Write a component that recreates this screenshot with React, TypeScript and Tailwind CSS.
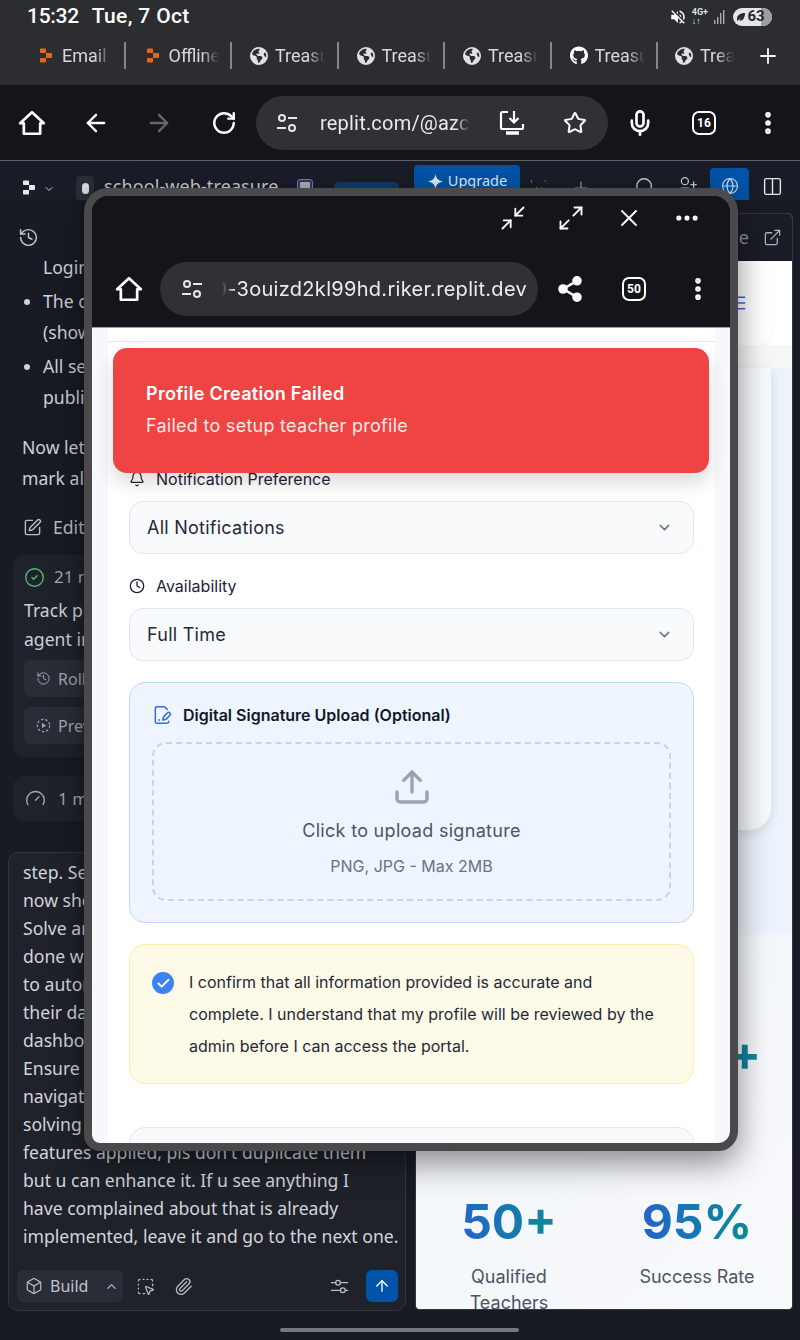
import React from "react";
import {
  ArrowLeft, ArrowRight, ArrowUp, Bell, Box, ChevronDown, ChevronUp, CircleCheck, Clock, Columns2, ExternalLink,
  FileSignature, Gauge, Globe, History, Maximize2, Mic, Minimize2, MoreHorizontal, MoreVertical, Paperclip, Plus,
  RotateCw, Search, Share2, SquareDashedMousePointer, SquarePen, Star, Upload, UserPlus, X, Check, Menu,
} from "lucide-react";
import { FaGithub } from "react-icons/fa";
import { FaEarthAmericas } from "react-icons/fa6";
import { MdVolumeOff } from "react-icons/md";

const ReplitLogo = ({ className, color }: { className?: string; color: string }) => (
  <svg viewBox="0 0 14 16" className={className} fill={color}>
    <path d="M1 1.5C1 .9 1.4.5 2 .5h4c.6 0 1 .4 1 1V5H2c-.6 0-1-.4-1-1z" />
    <path d="M7 5h5c.6 0 1 .4 1 1v3c0 .6-.4 1-1 1H7z" />
    <path d="M2 10h5v3.5c0 .6-.4 1-1 1H2c-.6 0-1-.4-1-1V11c0-.6.4-1 1-1z" />
  </svg>
);

const HomeIcon = ({ className }: { className?: string }) => (
  <svg viewBox="0 0 24 24" className={className} fill="none" stroke="currentColor" strokeWidth="2.3" strokeLinejoin="round">
    <path d="M12 2.8 1.8 12.2H5v9h14v-9h3.2z" />
  </svg>
);

const TuneIcon = ({ className }: { className?: string }) => (
  <svg viewBox="0 0 24 24" className={className} fill="none" stroke="currentColor" strokeWidth="2">
    <circle cx="7" cy="7" r="3" />
    <path d="M13 7h9M2 17h9" />
    <circle cx="17" cy="17" r="3" />
  </svg>
);

const SliderIcon = ({ className }: { className?: string }) => (
  <svg viewBox="0 0 20 20" className={className} fill="none" stroke="currentColor" strokeWidth="1.4">
    <path d="M1 6h5M11 6h8M1 14h10M16 14h3" />
    <circle cx="8.5" cy="6" r="2.5" />
    <circle cx="13.5" cy="14" r="2.5" />
  </svg>
);

const DashedPlay = ({ className }: { className?: string }) => (
  <svg viewBox="0 0 16 16" className={className} fill="none" stroke="currentColor" strokeWidth="1.3">
    <circle cx="8" cy="8" r="6.6" strokeDasharray="2.6 2" />
    <path d="M6.4 5.2 10.8 8l-4.4 2.8z" fill="currentColor" stroke="none" />
  </svg>
);

const CountBox = ({ n }: { n: string }) => (
  <div className="flex h-[24px] w-[24px] items-center justify-center rounded-[7px] border-[2.5px] border-white font-['Roboto',sans-serif] text-[12px] font-bold text-white">{n}</div>
);

const InstallIcon = () => (
  <svg viewBox="0 0 26 26" className="h-[26px] w-[26px] text-white" fill="none" stroke="currentColor" strokeWidth="2.2">
    <path d="M9 2H3.5A1.5 1.5 0 0 0 2 3.5v14A1.5 1.5 0 0 0 3.5 19h19a1.5 1.5 0 0 0 1.5-1.5V14" />
    <path d="M15 1v11M10.5 8l4.5 4.5L19.5 8" />
    <path d="M7 23h13" strokeWidth="3.5" />
  </svg>
);

const Tab = ({ icon, label }: { icon: React.ReactNode; label: string }) => (
  <div className="flex h-[27px] w-[106.5px] shrink-0 items-center border-r-2 border-[#85868a] pl-[18px]">
    <div className="flex w-[18px] shrink-0 justify-center">{icon}</div>
    <span className="ml-[7px] w-[50px] overflow-hidden whitespace-nowrap text-[18px] text-[#d8d9db] [mask-image:linear-gradient(to_right,black_65%,transparent)]">{label}</span>
  </div>
);

const Field = ({ icon, label, value }: { icon: React.ReactNode; label: string; value: string }) => (
  <div className="flex flex-col">
    <div className="flex h-[22px] items-center gap-[11px] text-[16px] font-normal text-[#1b2433]">
      {icon}
      <span>{label}</span>
    </div>
    <div className="mt-[11px] flex h-[53px] items-center justify-between rounded-[14px] border border-[#e2e8f0] bg-[#f8fafc] pl-[17px] pr-[20px] text-[18px] tracking-[0.25px] text-[#1f2937]">
      <span>{value}</span>
      <ChevronDown className="h-[17px] w-[17px] text-[#6b7280]" strokeWidth={2} />
    </div>
  </div>
);

const gradient = "bg-gradient-to-r from-[#2563c9] to-[#0d8a94] bg-clip-text text-transparent";

const FloatingWindow = () => (
  <div className="absolute left-[84px] top-[188px] z-10 flex h-[963px] w-[654px] flex-col overflow-hidden rounded-[24px] rounded-bl-[16px] rounded-br-[20px] border-[8px] border-[#4a4a4c] bg-[#13151a] shadow-[0_12px_32px_rgba(0,0,0,0.45)]">
    <div className="flex h-[131px] shrink-0 flex-col bg-[#13151a] text-white">
      <div className="flex h-[50px] items-center justify-end gap-[30px] pb-[7px] pr-[29px]">
        <Minimize2 className="h-[28px] w-[28px]" strokeWidth={1.6} />
        <Maximize2 className="h-[28px] w-[28px]" strokeWidth={1.6} />
        <X className="h-[28px] w-[28px]" strokeWidth={1.6} />
        <MoreHorizontal className="h-[28px] w-[28px]" strokeWidth={2.4} />
      </div>
      <div className="mt-[16px] flex h-[54px] items-center pl-[23px]">
        <HomeIcon className="h-[28px] w-[28px]" />
        <div className="ml-[17px] flex h-[54px] w-[378px] items-center rounded-full bg-[#303136] pl-[20px]">
          <TuneIcon className="h-[24px] w-[24px] shrink-0 text-[#e5e6e8]" />
          <div className="ml-[18px] w-[305px] overflow-hidden whitespace-nowrap text-[20px] tracking-[0.3px] text-[#eceded] [direction:rtl] [mask-image:linear-gradient(to_right,transparent,black_12px)]">
            0-3ouizd2kl99hd.riker.replit.dev
          </div>
        </div>
        <Share2 className="ml-[18px] h-[28px] w-[28px] fill-white" strokeWidth={2.2} />
        <div className="ml-[38px]"><CountBox n="50" /></div>
        <MoreVertical className="ml-[38px] h-[28px] w-[28px]" strokeWidth={2.8} />
      </div>
    </div>
    <div className="h-[1px] shrink-0 bg-[#9a9ca3]" />
    <div className="relative flex min-h-0 flex-1 bg-[#f7f8fb]">
      <div className="ml-[16px] mr-[15px] flex min-w-0 flex-1 flex-col overflow-hidden bg-white">
        <div className="h-[14px] shrink-0 border-b border-[#e5e7eb]" />
        <div className="flex flex-col px-[21px] pt-[126px]">
          <Field icon={<Bell className="h-[16px] w-[16px]" strokeWidth={1.8} />} label="Notification Preference" value="All Notifications" />
          <div className="mt-[21px]">
            <Field icon={<Clock className="h-[16px] w-[16px]" strokeWidth={2} />} label="Availability" value="Full Time" />
          </div>
          <div className="mt-[21px] flex h-[241px] flex-col rounded-[16px] border border-[#bfdbf5] bg-[#eef5fe] px-[22px] pt-[20px]">
            <div className="flex h-[24px] items-center gap-[11px] text-[16px] font-semibold text-[#111827]">
              <FileSignature className="h-[20px] w-[20px] text-[#2f6fdb]" strokeWidth={1.8} />
              <span>Digital Signature Upload (Optional)</span>
            </div>
            <div className="mt-[15px] flex h-[159px] flex-col items-center rounded-[14px] border-2 border-dashed border-[#cdd3de] pt-[23px]">
              <Upload className="h-[40px] w-[40px] text-[#9ca3af]" strokeWidth={2} />
              <div className="mt-[10px] text-[18px] tracking-[0.3px] text-[#4b5563]">Click to upload signature</div>
              <div className="mt-[10px] text-[16px] text-[#6b7280]">PNG, JPG - Max 2MB</div>
            </div>
          </div>
          <div className="mt-[21px] flex h-[140px] items-start rounded-[16px] border border-[#fbeea8] bg-[#fefae8] pl-[22px] pt-[21px]">
            <div className="mt-[6px] flex h-[22px] w-[22px] shrink-0 items-center justify-center rounded-full bg-[#3b82f6]">
              <Check className="h-[15px] w-[15px] text-white" strokeWidth={3} />
            </div>
            <p className="ml-[15px] w-[470px] text-[16px] leading-[32px] text-[#1f2937]">
              I confirm that all information provided is accurate and complete. I understand that my profile will be reviewed by the admin before I can access the portal.
            </p>
          </div>
          <div className="mt-[43px] h-[60px] shrink-0 rounded-[16px] border border-[#e5e7eb] bg-[#f8fafc]" />
        </div>
      </div>
      <div className="absolute left-[21px] top-[20px] flex h-[125px] w-[596px] flex-col justify-center rounded-[14px] bg-[#ef4444] pb-[2px] pl-[33px] text-white shadow-[0_10px_20px_rgba(0,0,0,0.14)]">
        <div className="text-[18px] font-semibold leading-[24px] tracking-[0.3px]">Profile Creation Failed</div>
        <div className="mt-[8px] text-[18px] leading-[24px] tracking-[0.27px] text-[#fde8e8]">Failed to setup teacher profile</div>
      </div>
    </div>
  </div>
);

const Line = ({ children }: { children: React.ReactNode }) => <div className="h-[28px] whitespace-nowrap leading-[28px]">{children}</div>;

const LeftPanel = () => (
  <div className="flex w-[415px] shrink-0 flex-col overflow-hidden font-['Noto_Sans',sans-serif] text-[#cdd0d6]">
    <div className="h-[52px] shrink-0 pl-[18px] pt-[27px]">
      <History className="h-[21px] w-[21px] text-[#c4c6cc]" strokeWidth={1.7} />
    </div>
    <div className="text-[17.6px] leading-[31px]">
      <div className="pl-[43px]">Login</div>
      <ul className="mt-[3px] list-disc pl-[43px]">
        <li>The c<br />(show</li>
        <li className="mt-[3px]">All se<br />publi</li>
      </ul>
      <div className="mt-[19px] pl-[22px]">Now let<br />mark al</div>
    </div>
    <div className="mt-[19px] flex h-[28px] items-center gap-[11px] pl-[23px] text-[17.6px] text-[#b9bcc3]">
      <SquarePen className="h-[19px] w-[19px]" strokeWidth={1.8} />
      <span>Edited</span>
    </div>
    <div className="ml-[13px] mt-[14px] flex h-[202px] w-[380px] flex-col rounded-[12px] bg-[#1f222b] pl-[11px] pt-[9px]">
      <div className="flex h-[26px] items-center gap-[9px] text-[17px] text-[#a3a6ae]">
        <CircleCheck className="h-[21px] w-[21px] text-[#4ec07a]" strokeWidth={1.5} />
        <span>21 minutes</span>
      </div>
      <div className="mt-[6px] text-[17.6px] leading-[29px]">Track p<br />agent in</div>
      <div className="mt-[6px] flex h-[37px] items-center gap-[7px] rounded-[6px] bg-[#2a2d37] pl-[12px] text-[16px] text-[#a3a6ae]">
        <History className="h-[15px] w-[15px]" strokeWidth={1.6} />
        <span>Rollback</span>
      </div>
      <div className="mt-[10px] flex h-[37px] items-center gap-[7px] rounded-[6px] bg-[#2a2d37] pl-[12px] text-[16px] text-[#a3a6ae]">
        <DashedPlay className="h-[15px] w-[15px]" />
        <span>Preview</span>
      </div>
    </div>
    <div className="ml-[13px] mt-[19px] flex h-[45px] w-[380px] items-center gap-[12px] rounded-[12px] bg-[#1f222b] pl-[12px] text-[17px] text-[#a3a6ae]">
      <Gauge className="h-[21px] w-[21px]" strokeWidth={1.6} />
      <span>1 min</span>
    </div>
    <div className="ml-[8px] mt-[31px] flex h-[459px] w-[398px] flex-col rounded-[10px] border border-[#31353f] bg-[#1f222b] pl-[14px] pr-[4px] pt-[5px] text-[17.6px] text-[#d3d5da]">
      <Line>step. Se</Line>
      <Line>now sho</Line>
      <Line>Solve ar</Line>
      <Line>done w</Line>
      <Line>to autor</Line>
      <Line>their da</Line>
      <Line>dashbo</Line>
      <Line>Ensure</Line>
      <Line>navigat</Line>
      <Line>solving</Line>
      <Line>features applied, pls don't duplicate them</Line>
      <Line>but u can enhance it. If u see anything I</Line>
      <Line>have complained about that is already</Line>
      <Line>implemented, leave it and go to the next one.</Line>
      <div className="mt-[20px] flex h-[32px] items-center pr-[3px]">
        <div className="-ml-[6px] flex h-[32px] w-[106px] items-center rounded-[6px] bg-[#2a2d37] pl-[8px] text-[16px] text-[#c0c3c9]">
          <Box className="h-[18px] w-[18px]" strokeWidth={1.5} />
          <span className="ml-[7px]">Build</span>
          <ChevronUp className="ml-[16px] h-[15px] w-[15px]" strokeWidth={1.8} />
        </div>
        <SquareDashedMousePointer className="ml-[13px] h-[19px] w-[19px] text-[#b9bcc3]" strokeWidth={1.6} />
        <Paperclip className="ml-[19px] h-[19px] w-[19px] text-[#b9bcc3]" strokeWidth={1.6} />
        <SliderIcon className="ml-auto h-[19px] w-[19px] text-[#b9bcc3]" />
        <div className="ml-[17px] flex h-[32px] w-[32px] items-center justify-center rounded-[6px] bg-[#0053a6]">
          <ArrowUp className="h-[18px] w-[18px] text-white" strokeWidth={1.8} />
        </div>
      </div>
    </div>
  </div>
);

const RightPanel = () => (
  <div className="ml-0 mt-[13px] flex h-[1097px] w-[378px] shrink-0 flex-col overflow-hidden rounded-[5px] border border-[#31353f] bg-[#eef4fc]">
    <div className="flex h-[47px] shrink-0 items-center justify-end gap-[14px] bg-[#1a1d27] pr-[10px] font-['Noto_Sans',sans-serif] text-[18px] text-[#8f929a]">
      <span>e</span>
      <ExternalLink className="h-[19px] w-[19px] text-[#b0b3ba]" strokeWidth={1.6} />
    </div>
    <div className="h-[84px] shrink-0 bg-white pr-[20px]">
      <div className="flex h-[84px] items-center justify-end rounded-b-[16px] bg-white pr-[24px] shadow-[0_2px_6px_rgba(0,0,0,0.04)]">
        <Menu className="h-[20px] w-[20px] text-[#2f6fdb]" strokeWidth={1.8} />
      </div>
    </div>
    <div className="h-[23px] shrink-0 bg-[#f6f7f7]" />
    <div className="flex h-[567px] shrink-0 flex-col bg-[#edf3fc]">
      <div className="mr-[21px] h-[462px] shrink-0 rounded-b-[22px] bg-[#f6fafd] shadow-[0_4px_12px_rgba(0,0,0,0.1)]" />
      <div className="flex-1" />
    </div>
    <div className="flex min-h-0 flex-1 flex-col bg-gradient-to-br from-[#f1f5fa] to-[#f8fafc] pt-[98px] font-['Inter',sans-serif]">
      <div className="grid h-[48px] shrink-0 grid-cols-2 items-start">
        <div />
        <div className={`pl-[8px] text-center text-[48px] font-bold leading-[48px] ${gradient}`}>100+</div>
      </div>
      <div className="mt-[112px] grid grid-cols-2">
        <div className="flex flex-col items-center pr-[2px]">
          <div className={`text-[48px] font-bold leading-[58px] ${gradient}`}>50+</div>
          <div className="mt-[13px] text-center text-[18px] leading-[26px] text-[#4b5563]">Qualified<br />Teachers</div>
        </div>
        <div className="flex flex-col items-center pr-[2px]">
          <div className={`text-[48px] font-bold leading-[58px] ${gradient}`}>95%</div>
          <div className="mt-[13px] text-center text-[18px] leading-[26px] text-[#4b5563]">Success Rate</div>
        </div>
      </div>
    </div>
  </div>
);

export default function App() {
  return (
    <div className="relative flex h-[1340px] w-[800px] flex-col overflow-hidden bg-[#181b24] font-['Inter',sans-serif]">
      {/* Status bar */}
      <div className="flex h-[33px] shrink-0 items-center justify-between bg-[#2b2d31] pl-[27px] pr-[28px] font-['Roboto',sans-serif] text-white">
        <div className="text-[21px] font-medium tracking-[-0.3px]">
          <span>15:32</span>
          <span className="ml-[13px] tracking-[0.35px]">Tue, 7 Oct</span>
        </div>
        <div className="flex items-center">
          <MdVolumeOff className="h-[18px] w-[18px]" />
          <div className="ml-[5px] text-[9px] font-bold leading-[9px] text-[#dfe0e2]">4G+<br />↓↑</div>
          <svg viewBox="0 0 12 16" className="ml-[5px] h-[16px] w-[12px]">
            <path d="M1 11h1.4v4H1zM4 8h1.4v7H4zM7 4h1.4v11H7zM10 1h1.4v14H10z" fill="#a9abaf" />
          </svg>
          <div className="relative ml-[8px] flex h-[18px] w-[39px] items-center justify-center overflow-hidden rounded-full bg-[#e4e5e6] pl-[7px] text-[15px] font-bold text-[#26282c]">
            <span className="absolute bottom-0 right-0 top-0 w-[11px] bg-[#9c9da0]" />
            <svg viewBox="0 0 10 10" className="absolute left-[3px] top-[4px] h-[10px] w-[10px]" fill="#26282c">
              <path d="M9 1C4 1 1 3.5 1 7c0 .7.2 1.4.5 2l1-1C4 6 6 4.500 7 4 5.500 5 4 6.500 3.200 8.300 6.500 9.500 9 6 9 1z" />
            </svg>
            <span className="relative">63</span>
          </div>
        </div>
      </div>
      {/* Tab strip */}
      <div className="flex h-[52px] shrink-0 items-center overflow-hidden bg-[#2b2d31] pb-[7px] pl-[19px] font-['Roboto',sans-serif]">
        <Tab icon={<ReplitLogo className="h-[16px] w-[14px]" color="#e5661d" />} label="Email" />
        <Tab icon={<ReplitLogo className="h-[16px] w-[14px]" color="#e5661d" />} label="Offline" />
        <Tab icon={<FaEarthAmericas className="h-[18px] w-[18px] text-[#e0e1e3]" />} label="Treasure" />
        <Tab icon={<FaEarthAmericas className="h-[18px] w-[18px] text-[#e0e1e3]" />} label="Treasure" />
        <Tab icon={<FaEarthAmericas className="h-[18px] w-[18px] text-[#e0e1e3]" />} label="Treasure" />
        <Tab icon={<FaGithub className="h-[21px] w-[21px] text-white" />} label="Treasure" />
        <div className="flex w-[86px] shrink-0 items-center pl-[17px]">
          <FaEarthAmericas className="h-[18px] w-[18px] shrink-0 text-[#e0e1e3]" />
          <span className="ml-[7px] w-[34px] overflow-hidden whitespace-nowrap text-[18px] text-[#d8d9db] [mask-image:linear-gradient(to_right,black_50%,transparent)]">Treasure</span>
        </div>
        <Plus className="ml-[12px] h-[24px] w-[24px] shrink-0 text-white" strokeWidth={1.8} />
      </div>
      {/* Browser toolbar */}
      <div className="flex h-[75px] shrink-0 items-center bg-[#13151a] pl-[18px] font-['Roboto',sans-serif] text-white">
        <HomeIcon className="h-[28px] w-[28px]" />
        <ArrowLeft className="ml-[36px] h-[28px] w-[28px]" strokeWidth={2} />
        <ArrowRight className="ml-[35px] h-[28px] w-[28px] text-[#66686c]" strokeWidth={2} />
        <RotateCw className="ml-[38px] h-[26px] w-[26px]" strokeWidth={2.2} />
        <div className="ml-[19px] flex h-[54px] w-[352px] items-center rounded-full bg-[#303136] pl-[19px]">
          <TuneIcon className="h-[24px] w-[24px] shrink-0 text-[#e5e6e8]" />
          <span className="ml-[21px] w-[150px] overflow-hidden whitespace-nowrap text-[20px] tracking-[0.2px] text-[#e9eaeb] [mask-image:linear-gradient(to_right,black_90%,transparent)]">replit.com/@azcode</span>
          <div className="ml-[29px]"><InstallIcon /></div>
          <Star className="ml-[38px] h-[24px] w-[24px]" strokeWidth={2} />
        </div>
        <Mic className="ml-[18px] h-[28px] w-[28px]" strokeWidth={2.3} />
        <div className="ml-[38px]"><CountBox n="16" /></div>
        <MoreVertical className="ml-[38px] h-[28px] w-[28px]" strokeWidth={2.8} />
      </div>
      <div className="h-[1px] shrink-0 bg-[#5e6066]" />
      {/* Replit header */}
      <div className="flex h-[39px] shrink-0 items-start overflow-hidden bg-[#1a1d27] pl-[22px] text-[#c7c9cf]">
        <ReplitLogo className="mt-[19px] h-[16px] w-[14px]" color="#e8e8e8" />
        <ChevronDown className="ml-[7px] mt-[22px] h-[12px] w-[12px]" strokeWidth={2} />
        <div className="ml-[21px] mt-[15px] flex h-[24px] w-[18px] items-center justify-center rounded-[4px] bg-[#2a2d37]">
          <div className="h-[11px] w-[7px] rounded-full bg-[#d9d9d9]" />
        </div>
        <span className="ml-[10px] mt-[12px] whitespace-nowrap font-['Noto_Sans',sans-serif] text-[18px] tracking-[0.1px]">school-web-treasure</span>
        <div className="ml-[19px] mt-[18px] flex h-[16px] w-[16px] items-center justify-center rounded-[3px] border border-[#7f6bdb] bg-[#3a3360]">
          <div className="h-[10px] w-[10px] rounded-[1px] bg-[#a9aab0]" />
        </div>
        <div className="ml-[21px] mt-[21px] h-[18px] w-[65px] rounded-t-[5px] bg-[#0e3a6b]" />
        <div className="ml-[15px] mt-[4px] flex h-[35px] w-[106px] items-start justify-center gap-[5px] rounded-t-[4px] bg-[#0053a6] pt-[5px] font-['Noto_Sans',sans-serif] text-[14.5px] text-[#dce7f5]">
          <svg viewBox="0 0 16 16" className="mt-[4px] h-[15px] w-[15px]" fill="currentColor">
            <path d="M8 0c.7 4.500 2.500 6.800 8 8-5.500 1.200-7.300 3.500-8 8-.7-4.500-2.500-6.800-8-8 5.500-1.200 7.300-3.500 8-8z" />
          </svg>
          <span>Upgrade</span>
        </div>
        <div className="ml-[10px] mt-[16px] h-[14px] whitespace-nowrap text-[9px] text-[#9a9ca3]">ꞌ ˎ ˌ ˈ</div>
        <Plus className="ml-[25px] mt-[17px] h-[20px] w-[20px] text-[#8f929a]" strokeWidth={1.5} />
        <Search className="ml-[43px] mt-[15px] h-[22px] w-[22px]" strokeWidth={1.5} />
        <UserPlus className="ml-[21px] mt-[14px] h-[21px] w-[21px]" strokeWidth={1.5} />
        <div className="ml-[12px] mt-[7px] flex h-[32px] w-[39px] items-center justify-center rounded-t-[4px] bg-[#0053a6]">
          <Globe className="mt-[4px] h-[18px] w-[18px] text-[#c9d8ee]" strokeWidth={1.5} />
        </div>
        <Columns2 className="ml-[13px] mt-[15px] h-[21px] w-[21px] text-[#e4e5e8]" strokeWidth={1.6} />
      </div>
      {/* Workspace */}
      <div className="flex min-h-0 flex-1 items-start">
        <LeftPanel />
        <RightPanel />
      </div>
      <FloatingWindow />
      {/* Gesture bar */}
      <div className="absolute bottom-[8px] left-[280px] z-20 h-[4px] w-[239px] rounded-full bg-[#77787d]" />
    </div>
  );
}
